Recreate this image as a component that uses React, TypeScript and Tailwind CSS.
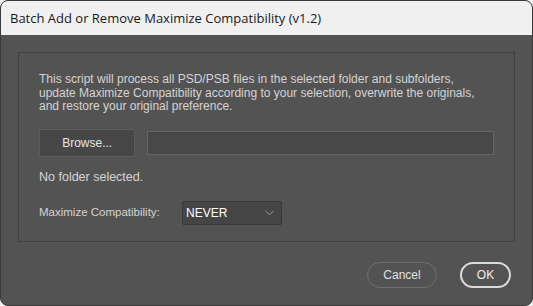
import React from "react";

export default function App() {
  return (
    <div className="w-[533px] h-[306px] bg-[#f0f0f0] relative overflow-hidden">
      <div className="absolute inset-0 rounded-[8px] border border-[#3a3a3a] overflow-hidden flex flex-col bg-[#535353]">
        <div className="h-[34px] bg-[#f0f0f0] flex items-center pl-[9px] pt-[1px] shrink-0">
          <span className="text-[13px] text-[#1a1a1a] font-['Open_Sans',sans-serif] leading-none">
            Batch Add or Remove Maximize Compatibility (v1.2)
          </span>
        </div>
        <div className="flex-1 flex flex-col px-[17px] pt-[17px] font-['Liberation_Sans',sans-serif] text-[12px] text-[#d4d4d4]">
          <div className="h-[190px] border border-[#404040] px-[20px] pt-[20px] flex flex-col">
            <p className="leading-[13.5px]">
              This script will process all PSD/PSB files in the selected folder and subfolders,
              <br />
              update Maximize Compatibility according to your selection, overwrite the originals,
              <br />
              and restore your original preference.
            </p>
            <div className="flex items-center mt-[15px] gap-[12px]">
              <button className="w-[97px] h-[28px] bg-[#474747] border border-[#5c5c5c] rounded-[2px] text-[#e6e6e6] text-[12px]">
                Browse...
              </button>
              <div className="w-[349px] h-[24px] bg-[#484848] border border-[#666666]" />
            </div>
            <div className="mt-[13px] leading-[14px] text-[12.5px]">No folder selected.</div>
            <div className="flex items-center mt-[17px]">
              <span className="w-[143px] text-[11.5px]">Maximize Compatibility:</span>
              <div className="w-[100px] h-[24px] bg-[#454545] border border-[#3a3a3a] rounded-[2px] flex items-center pl-[3px] pr-[7px] justify-between">
                <span className="text-[#ffffff] text-[12px]">NEVER</span>
                <svg width="9" height="6" viewBox="0 0 9 6">
                  <path d="M0.5 0.8 L4.5 4.8 L8.5 0.8" stroke="#9a9a9a" strokeWidth="1" fill="none" />
                </svg>
              </div>
            </div>
          </div>
          <div className="flex justify-end gap-[23px] mt-[20px] pr-[4px]">
            <button className="w-[70px] h-[26px] rounded-full border border-[#6e6e6e] text-[#e0e0e0] text-[12px]">
              Cancel
            </button>
            <button className="w-[51px] h-[26px] rounded-full border-[2px] border-[#dcdcdc] text-[#f0f0f0] text-[12px]">
              OK
            </button>
          </div>
        </div>
      </div>
    </div>
  );
}
